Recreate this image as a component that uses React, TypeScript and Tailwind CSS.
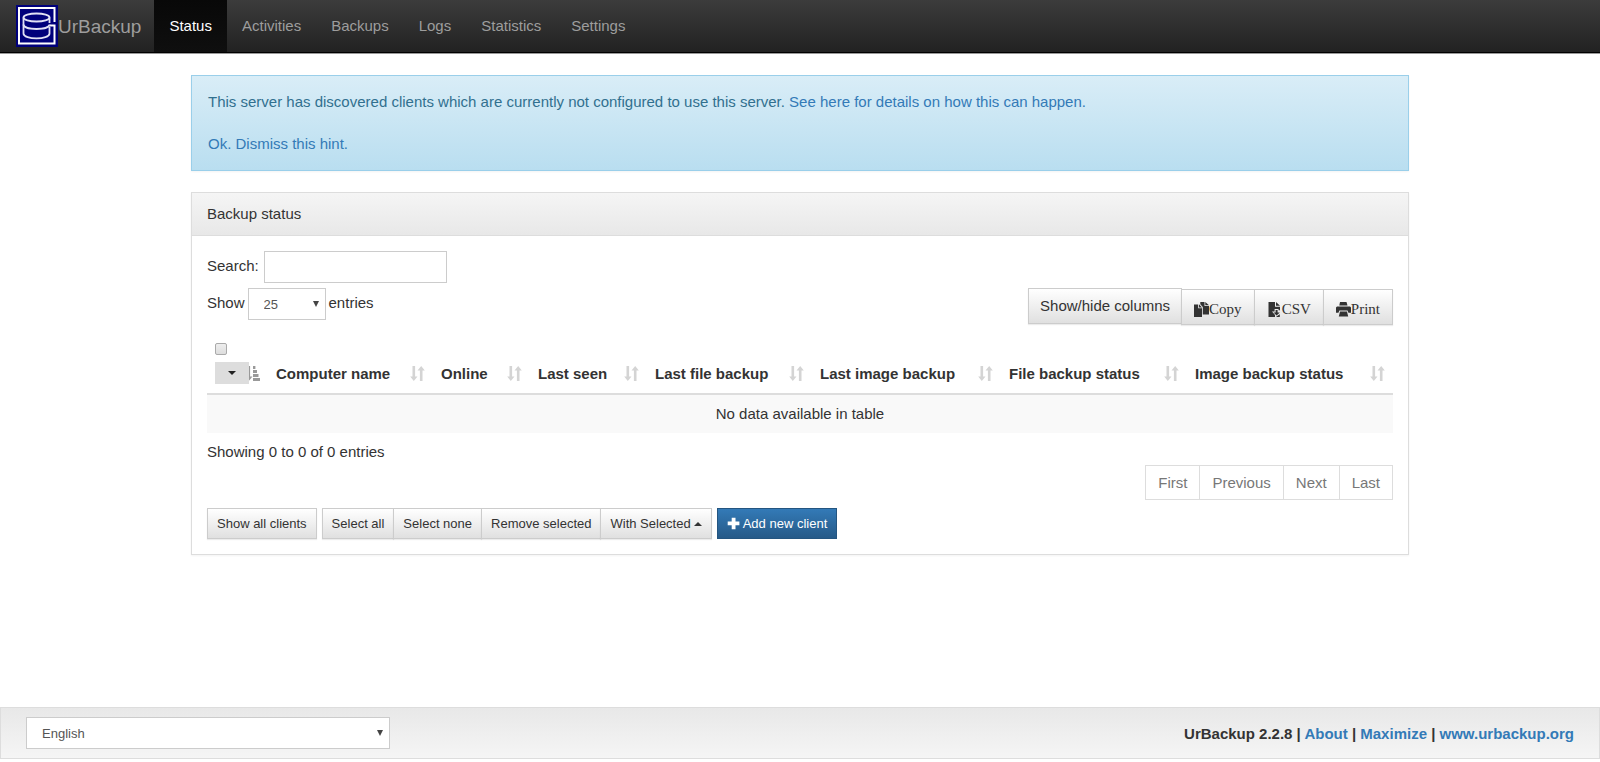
import { useState } from 'react'

const navItems = ['Status', 'Activities', 'Backups', 'Logs', 'Statistics', 'Settings']

const columns = [
  { label: 'Computer name', width: 'w-[165px]' },
  { label: 'Online', width: 'w-[97px]' },
  { label: 'Last seen', width: 'w-[117px]' },
  { label: 'Last file backup', width: 'w-[165px]' },
  { label: 'Last image backup', width: 'w-[189px]' },
  { label: 'File backup status', width: 'w-[186px]' },
  { label: 'Image backup status', width: 'w-[206px]' },
]

const pages = ['First', 'Previous', 'Next', 'Last']

const buttonColors =
  'border border-[#ccc] bg-linear-to-b from-white to-[#e0e0e0] text-[#333] shadow-[inset_0_1px_0_rgba(255,255,255,0.15),0_1px_1px_rgba(0,0,0,0.075)]'
const smallButton = 'h-[31px] px-[9px] text-[13px] leading-[18px]'
const exportButton = 'mt-px -ml-px flex h-9 items-center px-3 pt-1 font-["Liberation_Serif",serif]'

const Logo = () => (
  <svg viewBox="0 0 42 42" className="size-[42px]" fill="none" stroke="#fff">
    <rect width="42" height="42" fill="#00007b" stroke="none" />
    <path d="M38.5 17V3H3V38.5H38.5V20.5H33.5" strokeWidth="2" />
    <g stroke="#e0e0f4" strokeWidth="1.8">
      <ellipse cx="20.5" cy="12.5" rx="13" ry="4" />
      <path d="M7.5 12.5V28.5C7.5 35 33.5 35 33.5 28.5V22M33.5 12.5V18" />
      <path d="M7.5 19.5C7.5 25.5 33.5 25.5 33.5 19.5" />
    </g>
  </svg>
)

const SortIcon = () => (
  <svg viewBox="0 0 15 15" className="absolute right-2 bottom-3 size-[15px]" fill="#d4d4d4">
    <path d="M2.5 0h2.6v10.5h2.4L3.8 15 .2 10.5h2.3zM9.9 15h2.6V4.5h2.3L11.2 0 7.5 4.5h2.4z" />
  </svg>
)

const SortAscIcon = () => (
  <svg viewBox="0 0 15 15" className="absolute right-2 bottom-3 size-[15px]" fill="#999">
    <path d="M2.5 0h2.6v10.5h2.4L3.8 15 .2 10.5h2.3zM8 0h2.4v3H8zM8 4h4v3H8zM8 8h5.5v3H8zM8 12h7v3H8z" />
  </svg>
)

const CopyIcon = () => (
  <svg viewBox="0 0 15 15" className="size-[15px]" fill="#333">
    <path d="M0 2.5h4.2v3.8h3.8V15H0zM5 2.3 8 5.4H5z" />
    <path d="M6.3 0h4.2v4H15v8.4H8.8V5L6.3 2.3zM11.3 0 15 3.3h-3.7z" />
  </svg>
)

const SaveFileIcon = () => (
  <svg viewBox="0 0 15 15" className="size-[15px]" fill="#333">
    <path d="M1.5 0H8v4.8h5v3.4h-1.5V7H7.6v2.6H5L8 13v2H1.5zM9 0l4 3.8H9z" />
    <path d="M8.6 8h2v2.6h2.2l-3.2 3-3.1-3h2.1zM9 15l1.2-.9 2.6-1.9V15z" />
  </svg>
)

const PrintIcon = () => (
  <svg viewBox="0 0 15 15" className="size-[15px]" fill="#333">
    <path d="M4 0h6.5l1 3.6H3.3zM1 4.6h13l1 1v5.2h-2.6L11.5 8.4H3.4l-.9 2.4H0V5.6zM4 9.6h7l1.2 4.9H2.8z" />
  </svg>
)

const PlusIcon = () => (
  <svg viewBox="0 0 13 13" className="size-[13px]" fill="#fff">
    <path d="M4.7.7h3.8v3.9h3.9v3.7H8.5v4H4.7v-4H.7V4.6h4z" />
  </svg>
)

const SelectArrow = () => (
  <svg viewBox="0 0 6 6" className="pointer-events-none absolute top-[13px] right-[7px] size-[6px]" fill="#444">
    <path d="M0 0h6L3 6z" />
  </svg>
)

const App = () => {
  const [language, setLanguage] = useState<string>('English')
  const [pageSize, setPageSize] = useState<string>('25')

  return (
    <div className='flex min-h-screen flex-col bg-white pb-[3px] font-["Liberation_Sans",Arial,sans-serif] text-[15px] leading-[21px] text-[#333]'>
      {/* top navigation */}
      <nav className="flex h-[53px] border-b border-black bg-linear-to-b from-[#3c3c3c] to-[#222] shadow-[0_1px_0_#999]">
        <a href="#" className="flex items-center pr-[13px] pl-4 text-[19px] text-[#9d9d9d]">
          <Logo />
          UrBackup
        </a>
        {navItems.map((item) => (
          <a
            key={item}
            href="#"
            className={
              item === 'Status'
                ? 'flex items-center bg-linear-to-b from-[#080808] to-[#0f0f0f] px-[15px] pb-0.5 text-white'
                : 'flex items-center px-[15px] pb-0.5 text-[#9d9d9d]'
            }
          >
            {item}
          </a>
        ))}
      </nav>

      <main className="mx-auto mt-[22px] w-full max-w-[1218px] grow">
        {/* discovery hint */}
        <div className="border border-[#9acfea] bg-linear-to-b from-[#d9edf7] to-[#b9def0] px-4 pt-[15px] pb-4 text-[#31708f] shadow-[0_1px_2px_rgba(0,0,0,0.05)]">
          <p>
            This server has discovered clients which are currently not configured to use this server.{' '}
            <a href="#" className="text-[#337ab7]">See here for details on how this can happen.</a>
          </p>
          <p className="mt-[21px]">
            <a href="#" className="text-[#337ab7]">Ok. Dismiss this hint.</a>
          </p>
        </div>

        {/* backup status */}
        <section className="mt-[21px] border border-[#ddd] shadow-[0_1px_2px_rgba(0,0,0,0.05)]">
          <h2 className="border-b border-[#ddd] bg-linear-to-b from-[#f5f5f5] to-[#e8e8e8] px-[15px] pt-[10px] pb-[11px]">
            Backup status
          </h2>
          <div className="p-[15px]">
            <label className="flex items-start gap-[5px]">
              <span className="pt-1">Search:</span>
              <input type="search" className="h-8 w-[183px] border border-[#ccc] px-3 text-[13px] outline-none" />
            </label>

            <div className="mt-[5px] flex items-start justify-between">
              <label className="flex gap-[3px]">
                <span className="pt-1">Show</span>
                <span className="relative">
                  <select
                    value={pageSize}
                    onChange={(e) => setPageSize(e.target.value)}
                    className="h-8 w-[78px] appearance-none border border-[#ccc] bg-white px-[15px] text-[13px] text-[#555]"
                  >
                    <option>10</option>
                    <option>25</option>
                    <option>50</option>
                  </select>
                  <SelectArrow />
                </span>
                <span className="pt-1">entries</span>
              </label>
              <div className="flex">
                <button className={`h-9 px-[11px] pb-0.5 ${buttonColors}`}>Show/hide columns</button>
                <button className={`${exportButton} ${buttonColors}`}><CopyIcon />Copy</button>
                <button className={`${exportButton} ${buttonColors}`}><SaveFileIcon />CSV</button>
                <button className={`${exportButton} ${buttonColors}`}><PrintIcon />Print</button>
              </div>
            </div>

            <table className="mt-[10px] w-full table-fixed">
              <thead>
                <tr className="border-b-2 border-[#ddd] text-left align-bottom">
                  <th className="relative w-[61px] px-2 pb-[9px]">
                    <input type="checkbox" aria-label="Select all clients" className="mt-2 block size-3 appearance-none rounded-xs border border-[#aaa] bg-linear-to-b from-[#eee] to-[#ddd]" />
                    <SortAscIcon />
                    <button aria-label="Selection menu" className="relative mt-[7px] flex h-[22px] w-[34px] items-center justify-center bg-[#ddd]">
                      <svg viewBox="0 0 8 4" className="h-1 w-2" fill="#222"><path d="M0 0h8L4 4z" /></svg>
                    </button>
                  </th>
                  {columns.map((column) => (
                    <th key={column.label} className={`relative px-2 pb-[9px] whitespace-nowrap ${column.width}`}>
                      {column.label}
                      <SortIcon />
                    </th>
                  ))}
                </tr>
              </thead>
              <tbody>
                <tr className="bg-[#f9f9f9]">
                  <td colSpan={8} className="px-2 pt-2 pb-[9px] text-center">No data available in table</td>
                </tr>
              </tbody>
            </table>

            <div className="mt-2">Showing 0 to 0 of 0 entries</div>
            <div className="mt-[3px] flex justify-end">
              {pages.map((page) => (
                <button key={page} className="-ml-px h-[35px] border border-[#ddd] bg-white px-3 text-[#777]">
                  {page}
                </button>
              ))}
            </div>

            <div className="mt-2 flex gap-[5px]">
              <button className={`${smallButton} ${buttonColors}`}>Show all clients</button>
              <div className="flex">
                <button className={`${smallButton} ${buttonColors}`}>Select all</button>
                <button className={`-ml-px ${smallButton} ${buttonColors}`}>Select none</button>
                <button className={`-ml-px ${smallButton} ${buttonColors}`}>Remove selected</button>
                <button className={`-ml-px flex items-center gap-[3px] ${smallButton} ${buttonColors}`}>
                  With Selected
                  <svg viewBox="0 0 8 4" className="h-1 w-2" fill="#333"><path d="M0 4h8L4 0z" /></svg>
                </button>
              </div>
              <button className={`flex items-center gap-[3px] border border-[#245580] bg-linear-to-b from-[#337ab7] to-[#265a88] text-white ${smallButton}`}>
                <PlusIcon />
                Add new client
              </button>
            </div>
          </div>
        </section>
      </main>

      <footer className="flex h-[52px] items-center justify-between border border-[#ddd] bg-linear-to-b from-[#e8e8e8] to-[#f5f5f5] px-[25px]">
        <div className="relative">
          <select
            aria-label="Language"
            value={language}
            onChange={(e) => setLanguage(e.target.value)}
            className="block h-8 w-[364px] appearance-none border border-[#ccc] bg-white px-[15px] text-[13px] text-[#555]"
          >
            <option>English</option>
            <option>Deutsch</option>
          </select>
          <SelectArrow />
        </div>
        <div className="font-bold">
          UrBackup 2.2.8 | <a href="#" className="text-[#337ab7]">About</a> |{' '}
          <a href="#" className="text-[#337ab7]">Maximize</a> |{' '}
          <a href="#" className="text-[#337ab7]">www.urbackup.org</a>
        </div>
      </footer>
    </div>
  )
}

export default App
